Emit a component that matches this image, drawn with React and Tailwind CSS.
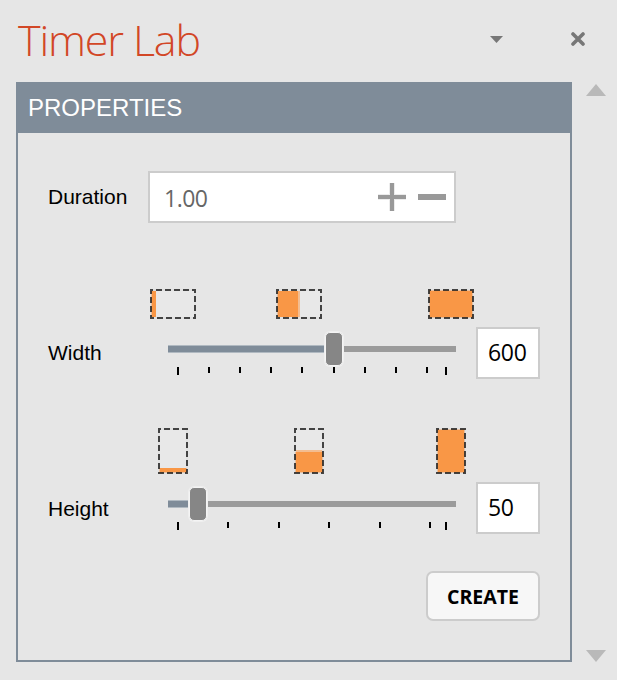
import React from "react";

const ORANGE = "#f99746";

function Preview({ w, h, fill }) {
  return (
    <svg width={w} height={h} viewBox={`0 0 ${w} ${h}`} className="block shrink-0" shapeRendering="crispEdges">
      <rect x="2" y="2" width={w - 4} height={h - 4} fill="#e8e8e8" />
      {fill.soft && <rect {...fill.soft} fill="#f3bd91" />}
      <rect x={fill.x} y={fill.y} width={fill.width} height={fill.height} fill={ORANGE} />
      <rect x="1" y="1" width={w - 2} height={h - 2} fill="none" stroke="#dedede" strokeOpacity="0.6" strokeWidth="2" />
      <rect
        x="1"
        y="1"
        width={w - 2}
        height={h - 2}
        fill="none"
        stroke="#000000"
        strokeOpacity="0.7"
        strokeWidth="2"
        strokeDasharray="6 3"
        strokeDashoffset="4"
      />
    </svg>
  );
}

function Slider({ value, ticks }) {
  return (
    <div className="w-[288px]">
      <div className="relative flex h-[34px] items-center">
        <div className="h-[6px] w-full bg-[#9b9b9b]" />
        <div
          className="absolute left-0 top-[13px] h-[8px] border-y border-[#b0b9c1] bg-[#7f8c99]"
          style={{ width: value }}
        />
        <div
          className="absolute top-0 h-[34px] w-[18px] rounded-[5px] border border-[#f4f4f4] bg-[#868686] shadow-[0_0_0_1px_#efefef]"
          style={{ left: value - 9 }}
        />
      </div>
      <svg width="288" height="8" className="mt-px block" shapeRendering="crispEdges">
        {ticks.map((x, i) => (
          <rect key={x} x={x} y="0" width="2" height={i === 0 || i === ticks.length - 1 ? 8 : 6} fill="#000" />
        ))}
      </svg>
    </div>
  );
}

function NumberBox({ children }) {
  return (
    <div className="flex h-[52px] w-[64px] items-center border-2 border-[#cccccc] bg-white pb-[2px] pl-[10px] font-['Open_Sans',sans-serif] text-[23px] leading-none tracking-[-0.3px] text-black">
      <span>{children}</span>
    </div>
  );
}

function Label({ children }) {
  return <span className="block text-[21px] leading-[24px] text-black">{children}</span>;
}

export default function App() {
  return (
    <div className="flex h-[680px] w-[617px] flex-col overflow-hidden bg-[#e6e6e6] font-['Liberation_Sans',Arial,sans-serif]">
      <header className="flex h-[82px] shrink-0 items-start">
        <h1 className="w-[490px] whitespace-nowrap pl-[18px] pt-[10px] font-['Open_Sans',sans-serif] text-[43px] font-light leading-[60px] tracking-[-1.15px] text-[#d24726]">
          Timer Lab
        </h1>
        <svg width="13" height="7" className="mt-[36px]">
          <path d="M0 0H13L6.5 7Z" fill="#777777" />
        </svg>
        <svg width="14" height="14" className="ml-[68px] mt-[32px]">
          <path d="M2 2L12 12M12 2L2 12" stroke="#777777" strokeWidth="3.6" strokeLinecap="round" />
        </svg>
      </header>

      <div className="flex pl-4">
        <section className="h-[580px] w-[556px] border-2 border-[#7f8c99]">
          <div className="flex h-[49px] items-center bg-[#7f8c99] pb-[2px] pl-[10px] text-[24px] leading-none text-white">
            PROPERTIES
          </div>

          <div className="flex pl-[30px] pt-[38px]">
            <div className="w-[100px] pt-[14px]">
              <Label>Duration</Label>
            </div>
            <div className="flex h-[52px] w-[308px] items-center justify-between border-2 border-[#cccccc] bg-white pl-[14px] pr-[8px]">
              <span className="pt-[3px] font-['Open_Sans',sans-serif] text-[23px] leading-none tracking-[-0.5px] text-[#666666]">
                1.00
              </span>
              <div className="flex gap-3">
                <svg width="28" height="28" shapeRendering="crispEdges">
                  <path d="M11 0H17V28H11ZM0 11H28V17H0Z" fill="#ececec" />
                  <path d="M12 0H16V28H12ZM0 12H28V16H0Z" fill="#999999" />
                </svg>
                <svg width="28" height="28" shapeRendering="crispEdges">
                  <path d="M0 11H28V17H0Z" fill="#999999" />
                </svg>
              </div>
            </div>
          </div>

          <div className="flex pl-[132px] pt-[66px]">
            <Preview w={46} h={30} fill={{ x: 1, y: 2, width: 5, height: 26 }} />
            <div className="w-[80px]" />
            <Preview
              w={46}
              h={30}
              fill={{ x: 1, y: 2, width: 21, height: 26, soft: { x: 22, y: 2, width: 2, height: 26 } }}
            />
            <div className="w-[106px]" />
            <Preview w={46} h={30} fill={{ x: 1, y: 1, width: 44, height: 28 }} />
          </div>
          <div className="flex pl-[30px] pt-[8px]">
            <div className="w-[120px] pt-[14px]">
              <Label>Width</Label>
            </div>
            <div className="w-[308px] pt-[5px]">
              <Slider value={166} ticks={[9, 40, 71, 102, 133, 165, 196, 227, 258, 277]} />
            </div>
            <NumberBox>600</NumberBox>
          </div>

          <div className="flex pl-[140px] pt-[49px]">
            <Preview w={30} h={46} fill={{ x: 1, y: 40, width: 28, height: 5 }} />
            <div className="w-[106px]" />
            <Preview
              w={30}
              h={46}
              fill={{ x: 1, y: 24, width: 28, height: 21, soft: { x: 2, y: 22, width: 26, height: 2 } }}
            />
            <div className="w-[112px]" />
            <Preview w={30} h={46} fill={{ x: 1, y: 1, width: 28, height: 44 }} />
          </div>
          <div className="flex pl-[30px] pt-[8px]">
            <div className="w-[120px] pt-[15px]">
              <Label>Height</Label>
            </div>
            <div className="w-[308px] pt-[5px]">
              <Slider value={30} ticks={[9, 59, 110, 160, 211, 261, 277]} />
            </div>
            <NumberBox>50</NumberBox>
          </div>

          <div className="flex justify-end pr-[30px] pt-[37px]">
            <button className="h-[50px] w-[114px] rounded-[7px] border-2 border-[#cccccc] bg-[#f7f7f7] pt-[2px] font-['Open_Sans',sans-serif] text-[19.5px] font-bold leading-none text-black">
              CREATE
            </button>
          </div>
        </section>

        <div className="ml-[14px] flex h-[580px] flex-col justify-between pt-[2px]">
          <svg width="20" height="12">
            <path d="M0 12L10 0L20 12Z" fill="#b9b9b9" />
          </svg>
          <svg width="20" height="12">
            <path d="M0 0H20L10 12Z" fill="#b9b9b9" />
          </svg>
        </div>
      </div>
    </div>
  );
}
